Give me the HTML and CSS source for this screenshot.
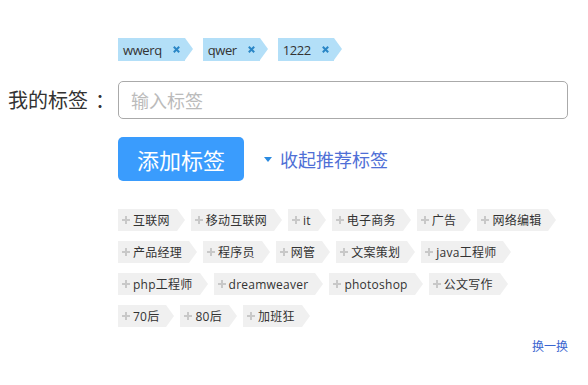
FILE: index.html
```html
<!DOCTYPE html>
<html lang="zh-CN">
<head>
<meta charset="utf-8">
<title>我的标签</title>
<link rel="stylesheet" href="styles.css">
</head>
<body>
<div class="tag-editor">
  <div class="row row-selected">
    <div class="label"></div>
    <div class="selected-tags">
      <span class="sel-tag">wwerq<svg class="x" viewBox="0 0 7 7"><path d="M0.8 0.8L6.2 6.2M6.2 0.8L0.8 6.2"/></svg></span>
      <span class="sel-tag">qwer<svg class="x" viewBox="0 0 7 7"><path d="M0.8 0.8L6.2 6.2M6.2 0.8L0.8 6.2"/></svg></span>
      <span class="sel-tag">1222<svg class="x" viewBox="0 0 7 7"><path d="M0.8 0.8L6.2 6.2M6.2 0.8L0.8 6.2"/></svg></span>
    </div>
  </div>
  <div class="row row-input">
    <div class="label">我的标签<span class="colon">：</span></div>
    <input class="tag-input" type="text" placeholder="输入标签">
  </div>
  <div class="row row-actions">
    <div class="label"></div>
    <div class="actions">
      <button class="add-btn">添加标签</button>
      <a class="toggle"><span class="caret"></span>收起推荐标签</a>
    </div>
  </div>
  <div class="row row-rec">
    <div class="label"></div>
    <div class="rec-tags">
      <span class="rec-tag"><svg class="plus" viewBox="0 0 8 8"><path d="M4 0V8M0 4H8"/></svg>互联网</span>
      <span class="rec-tag"><svg class="plus" viewBox="0 0 8 8"><path d="M4 0V8M0 4H8"/></svg>移动互联网</span>
      <span class="rec-tag"><svg class="plus" viewBox="0 0 8 8"><path d="M4 0V8M0 4H8"/></svg>it</span>
      <span class="rec-tag"><svg class="plus" viewBox="0 0 8 8"><path d="M4 0V8M0 4H8"/></svg>电子商务</span>
      <span class="rec-tag"><svg class="plus" viewBox="0 0 8 8"><path d="M4 0V8M0 4H8"/></svg>广告</span>
      <span class="rec-tag"><svg class="plus" viewBox="0 0 8 8"><path d="M4 0V8M0 4H8"/></svg>网络编辑</span>
      <span class="rec-tag"><svg class="plus" viewBox="0 0 8 8"><path d="M4 0V8M0 4H8"/></svg>产品经理</span>
      <span class="rec-tag"><svg class="plus" viewBox="0 0 8 8"><path d="M4 0V8M0 4H8"/></svg>程序员</span>
      <span class="rec-tag"><svg class="plus" viewBox="0 0 8 8"><path d="M4 0V8M0 4H8"/></svg>网管</span>
      <span class="rec-tag"><svg class="plus" viewBox="0 0 8 8"><path d="M4 0V8M0 4H8"/></svg>文案策划</span>
      <span class="rec-tag"><svg class="plus" viewBox="0 0 8 8"><path d="M4 0V8M0 4H8"/></svg>java工程师</span>
      <span class="rec-tag"><svg class="plus" viewBox="0 0 8 8"><path d="M4 0V8M0 4H8"/></svg>php工程师</span>
      <span class="rec-tag"><svg class="plus" viewBox="0 0 8 8"><path d="M4 0V8M0 4H8"/></svg>dreamweaver</span>
      <span class="rec-tag"><svg class="plus" viewBox="0 0 8 8"><path d="M4 0V8M0 4H8"/></svg>photoshop</span>
      <span class="rec-tag"><svg class="plus" viewBox="0 0 8 8"><path d="M4 0V8M0 4H8"/></svg>公文写作</span>
      <span class="rec-tag"><svg class="plus" viewBox="0 0 8 8"><path d="M4 0V8M0 4H8"/></svg>70后</span>
      <span class="rec-tag"><svg class="plus" viewBox="0 0 8 8"><path d="M4 0V8M0 4H8"/></svg>80后</span>
      <span class="rec-tag"><svg class="plus" viewBox="0 0 8 8"><path d="M4 0V8M0 4H8"/></svg>加班狂</span>
    </div>
  </div>
  <div class="row-refresh">
    <a class="refresh">换一换</a>
  </div>
</div>
</body>
</html>
```

FILE: styles.css
```css
* { box-sizing: border-box; }
html, body { margin: 0; padding: 0; background: #fff; }
body {
  font-family: "Open Sans", "Noto Sans CJK SC", sans-serif;
  color: #333;
}
.tag-editor {
  width: 588px;
  padding: 38px 20px 0 0;
}
.row {
  display: grid;
  grid-template-columns: 118px 1fr;
  align-items: center;
}
.label {
  padding-left: 8px;
  font-family: "Noto Sans CJK SC", sans-serif;
  font-size: 20px;
  line-height: 24px;
  color: #333;
  white-space: nowrap;
}
.colon {
  margin-left: 7px;
}
.selected-tags {
  display: flex;
  height: 23px;
}
.sel-tag {
  position: relative;
  display: inline-flex;
  align-items: center;
  height: 23px;
  padding: 0 5px;
  margin-right: 18px;
  background: #b3dff8;
  font-size: 13px;
  letter-spacing: -0.4px;
  color: #333;
}
.sel-tag::after {
  content: "";
  position: absolute;
  left: 100%;
  top: 0;
  border-left: 8px solid #b3dff8;
  border-top: 11.5px solid transparent;
  border-bottom: 11.5px solid transparent;
}
.x {
  width: 7px;
  height: 7px;
  margin-left: 11px;
  stroke: #2a86c6;
  stroke-width: 2;
  fill: none;
}
.row-input { margin-top: 20px; }
.tag-input {
  width: 450px;
  height: 38px;
  border: 1px solid #aaa;
  border-radius: 5px;
  padding: 0 12px;
  font-family: "Noto Sans CJK SC", sans-serif;
  font-size: 18px;
  color: #333;
  outline: none;
}
.tag-input::placeholder { color: #bbb; }
.row-actions { margin-top: 18px; }
.actions {
  display: flex;
  align-items: center;
}
.add-btn {
  width: 126px;
  height: 44px;
  border: none;
  border-radius: 5px;
  background: #3a9cfd;
  color: #fff;
  font-family: "Noto Sans CJK SC", sans-serif;
  font-size: 22px;
  padding: 0;
}
.toggle {
  display: inline-flex;
  align-items: center;
  margin-left: 20px;
  font-family: "Noto Sans CJK SC", sans-serif;
  font-size: 18px;
  color: #4f6fd6;
}
.caret {
  width: 0;
  height: 0;
  border-top: 5px solid #2a8ae0;
  border-left: 4px solid transparent;
  border-right: 4px solid transparent;
  margin-right: 8px;
}
.row-rec { margin-top: 28px; }
.rec-tags {
  display: flex;
  flex-wrap: wrap;
  row-gap: 10px;
}
.rec-tag {
  position: relative;
  display: inline-flex;
  align-items: center;
  height: 22px;
  padding: 0 7px 0 4px;
  margin-right: 14px;
  background: #f0f0f0;
  font-size: 12px;
  letter-spacing: 0.25px;
  color: #333;
  white-space: nowrap;
}
.rec-tag::after {
  content: "";
  position: absolute;
  left: 100%;
  top: 0;
  border-left: 8px solid #f0f0f0;
  border-top: 11px solid transparent;
  border-bottom: 11px solid transparent;
}
.plus {
  width: 8px;
  height: 8px;
  margin-right: 3px;
  stroke: #c8c8c8;
  stroke-width: 2;
  fill: none;
}
.row-refresh {
  display: flex;
  justify-content: flex-end;
  margin-top: 10px;
}
.refresh {
  font-family: "Noto Sans CJK SC", sans-serif;
  font-size: 12px;
  color: #3a66d0;
}
```
